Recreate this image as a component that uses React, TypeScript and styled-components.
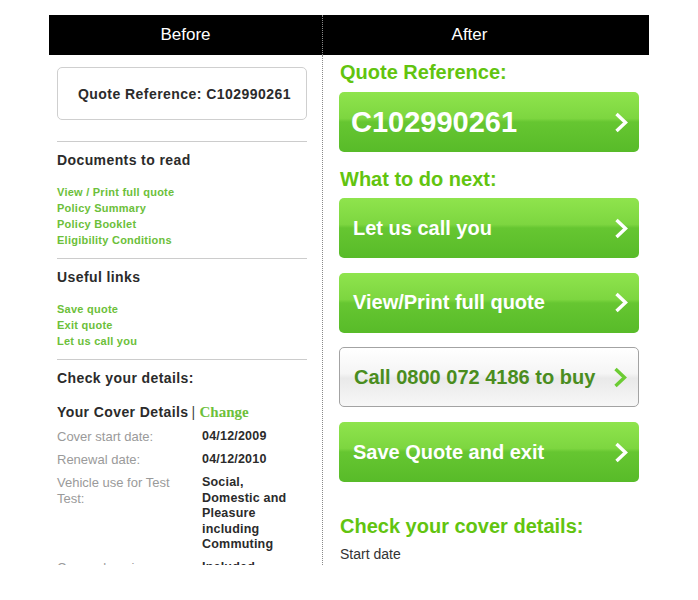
import React, { FC } from 'react';

import styled, { createGlobalStyle } from 'styled-components';

/**
 *
 * Styles
 */
const GlobalStyle = createGlobalStyle`
  html, body {
    margin: 0;
    padding: 0;
    background: #fff;
  }

  body {
    font-family: 'Liberation Sans', Arial, sans-serif;
    color: #333;
  }
`;

const Page = styled.div`
  width: 600px;
  margin-left: 49px;
  padding-top: 15px;
`;

const HeaderBar = styled.div`
  display: grid;
  grid-template-columns: 273px 327px;
  height: 40px;

  background: #000;
`;

const HeaderCell = styled.div<{ divided?: boolean }>`
  display: flex;
  justify-content: center;
  align-items: center;

  padding-right: ${({ divided }) => (divided ? 33 : 0)}px;
  border-left: ${({ divided }) => (divided ? '1px dotted #8a8a8a' : 'none')};

  color: #fff;
  font-size: 17px;
`;

const Body = styled.div`
  display: grid;
  grid-template-columns: 273px 327px;
  height: 510px;

  overflow: hidden;
`;

const LeftColumn = styled.div`
  padding: 12px 15px 0 8px;
  overflow: hidden;
`;

const RightColumn = styled.div`
  display: flex;
  padding: 5px 0 0 16px;

  flex-direction: column;

  border-left: 1px dotted #8a8a8a;
`;

const QuoteBox = styled.div`
  display: flex;
  height: 53px;
  box-sizing: border-box;
  padding-left: 20px;

  align-items: center;

  border: 1px solid #cfcfcf;
  border-radius: 5px;

  font-size: 14px;
  font-weight: bold;
  letter-spacing: 0.45px;
  color: #2b2b2b;
`;

const Divider = styled.div<{ offset: number }>`
  height: 1px;
  margin-top: ${({ offset }) => offset}px;

  background: #cccccc;
`;

const SectionTitle = styled.h3<{ offset: number }>`
  margin: ${({ offset }) => offset}px 0 0;

  font-size: 14px;
  line-height: 16px;
  font-weight: bold;
  letter-spacing: 0.4px;
  color: #2b2b2b;
`;

const LinkList = styled.div`
  display: flex;
  margin: 16px 0 10px;

  flex-direction: column;
`;

const SideLink = styled.a`
  font-size: 11px;
  line-height: 16px;
  font-weight: bold;
  letter-spacing: 0.25px;
  color: #6cc03a;
  text-decoration: none;
`;

const ChangeLink = styled.a`
  margin-left: 4px;

  font-family: 'Liberation Serif', 'Times New Roman', serif;
  font-size: 15px;
  font-weight: bold;
  letter-spacing: 0;
  color: #6cc03a;
  text-decoration: none;
`;

const Pipe = styled.span`
  margin-left: 3px;

  font-weight: normal;
  color: #444;
`;

const DetailRows = styled.div`
  display: flex;
  margin-top: 9px;

  flex-direction: column;
  gap: 7.5px;
`;

const DetailRow = styled.div`
  display: flex;

  line-height: 15.5px;
`;

const DetailLabel = styled.div`
  width: 130px;
  margin-right: 15px;

  font-size: 13px;
  color: #9a9a9a;
`;

const DetailValue = styled.div`
  width: 95px;

  font-size: 12.5px;
  font-weight: bold;
  letter-spacing: 0.2px;
  color: #2b2b2b;
`;

const GreenHeading = styled.h2<{ offset: number }>`
  margin: ${({ offset }) => offset}px 0 0 1px;

  font-size: 20px;
  line-height: 24px;
  font-weight: bold;
  color: #62c40f;
`;

const ButtonStack = styled.div`
  display: flex;
  margin-top: 7px;

  flex-direction: column;
  gap: 14.7px;
`;

const ActionButton = styled.a<{ variant?: 'green' | 'white'; large?: boolean }>`
  display: flex;
  width: 300px;
  height: 60px;
  box-sizing: border-box;
  padding: 0 11px 0 ${({ large }) => (large ? 12 : 14)}px;

  justify-content: space-between;
  align-items: center;

  border-radius: 5px;
  border: ${({ variant }) => (variant === 'white' ? '1px solid #a3a3a3' : 'none')};
  background: ${({ variant }) =>
    variant === 'white'
      ? 'linear-gradient(to bottom, #ffffff 0%, #f5f5f5 44%, #e9e9e9 52%, #f7f7f7 100%)'
      : 'linear-gradient(to bottom, #8fe44d 0%, #7dd640 44%, #66c631 50%, #58bb29 100%)'};

  font-size: ${({ large }) => (large ? 29 : 20)}px;
  font-weight: bold;
  color: ${({ variant }) => (variant === 'white' ? '#4a8d1e' : '#fff')};
  text-decoration: none;
`;

const BodyText = styled.p`
  margin: 7px 0 0 1px;

  font-size: 14px;
  line-height: 18px;
  color: #333;
`;

/**
 *
 * Types
 */
interface ChevronProps {
  color: string;
}

interface Detail {
  label: string;
  value: string;
}

/**
 *
 * Static items
 */
const documentLinks = ['View / Print full quote', 'Policy Summary', 'Policy Booklet', 'Eligibility Conditions'];

const usefulLinks = ['Save quote', 'Exit quote', 'Let us call you'];

const details: Detail[] = [
  { label: 'Cover start date:', value: '04/12/2009' },
  { label: 'Renewal date:', value: '04/12/2010' },
  { label: 'Vehicle use for Test Test:', value: 'Social, Domestic and Pleasure including Commuting' },
  { label: 'Comprehensive', value: 'Included' },
];

const Chevron: FC<ChevronProps> = ({ color }) => (
  <svg width="14" height="21" viewBox="0 0 14 21" fill="none">
    <polyline points="2.5,2 11.5,10.5 2.5,19" stroke={color} strokeWidth="3.4" strokeLinejoin="miter" />
  </svg>
);

const App: FC = () => (
  <>
    <GlobalStyle />
    <Page>
      <HeaderBar>
        <HeaderCell>Before</HeaderCell>
        <HeaderCell divided>After</HeaderCell>
      </HeaderBar>

      <Body>
        <LeftColumn>
          <QuoteBox>Quote Reference: C102990261</QuoteBox>

          <Divider offset={21} />
          <SectionTitle offset={10}>Documents to read</SectionTitle>
          <LinkList>
            {documentLinks.map((link) => (
              <SideLink key={link} href="#">
                {link}
              </SideLink>
            ))}
          </LinkList>

          <Divider offset={0} />
          <SectionTitle offset={10}>Useful links</SectionTitle>
          <LinkList>
            {usefulLinks.map((link) => (
              <SideLink key={link} href="#">
                {link}
              </SideLink>
            ))}
          </LinkList>

          <Divider offset={0} />
          <SectionTitle offset={10}>Check your details:</SectionTitle>
          <SectionTitle offset={18}>
            Your Cover Details
            <Pipe>|</Pipe>
            <ChangeLink href="#">Change</ChangeLink>
          </SectionTitle>

          <DetailRows>
            {details.map((detail) => (
              <DetailRow key={detail.label}>
                <DetailLabel>{detail.label}</DetailLabel>
                <DetailValue>{detail.value}</DetailValue>
              </DetailRow>
            ))}
          </DetailRows>
        </LeftColumn>

        <RightColumn>
          <GreenHeading offset={0}>Quote Reference:</GreenHeading>
          <ButtonStack style={{ marginTop: 8 }}>
            <ActionButton href="#" large>
              C102990261
              <Chevron color="#fff" />
            </ActionButton>
          </ButtonStack>

          <GreenHeading offset={15}>What to do next:</GreenHeading>
          <ButtonStack>
            <ActionButton href="#">
              Let us call you
              <Chevron color="#fff" />
            </ActionButton>
            <ActionButton href="#">
              View/Print full quote
              <Chevron color="#fff" />
            </ActionButton>
            <ActionButton href="#" variant="white">
              Call 0800 072 4186 to buy
              <Chevron color="#6ccc33" />
            </ActionButton>
            <ActionButton href="#">
              Save Quote and exit
              <Chevron color="#fff" />
            </ActionButton>
          </ButtonStack>

          <GreenHeading offset={32}>Check your cover details:</GreenHeading>
          <BodyText>Start date</BodyText>
        </RightColumn>
      </Body>
    </Page>
  </>
);

export default App;
